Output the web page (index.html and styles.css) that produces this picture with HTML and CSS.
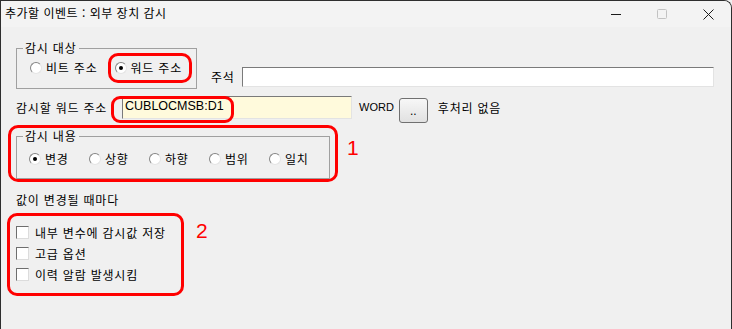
FILE: index.html
```html
<!DOCTYPE html>
<html lang="ko">
<head>
<meta charset="utf-8">
<title>추가할 이벤트 : 외부 장치 감시</title>
<link rel="stylesheet" href="styles.css">
</head>
<body>
<div class="window">
  <div class="titlebar">
    <span class="title">추가할 이벤트 : 외부 장치 감시</span>
    <div class="controls">
      <span class="ctl"><svg width="10" height="10" viewBox="0 0 10 10"><path d="M0 5.5H10" stroke="#1a1a1a" stroke-width="1"/></svg></span>
      <span class="ctl"><svg width="10" height="10" viewBox="0 0 10 10"><rect x="0.5" y="0.5" width="9" height="9" rx="1" fill="none" stroke="#c2c2c2" stroke-width="1"/></svg></span>
      <span class="ctl"><svg width="11" height="11" viewBox="0 0 11 11"><path d="M0.5 0.5L10.5 10.5M10.5 0.5L0.5 10.5" stroke="#1a1a1a" stroke-width="1"/></svg></span>
    </div>
  </div>
  <div class="content">
    <div class="row-target">
      <fieldset class="group group-target">
        <legend>감시 대상</legend>
        <div class="radios radios-target">
          <span class="radio"><span class="dot"></span>비트 주소</span>
          <span class="radio checked marked"><span class="dot"></span>워드 주소<span class="mark mark-word"></span></span>
        </div>
      </fieldset>
      <div class="comment">
        <span class="comment-label">주석</span>
        <span class="textbox wide"></span>
      </div>
    </div>

    <div class="row-address">
      <span class="field-label">감시할 워드 주소</span>
      <span class="textbox address">CUBLOCMSB:D1<span class="mark mark-address"></span></span>
      <span class="unit">WORD</span>
      <span class="browse">..</span>
      <span class="post">후처리 없음</span>
    </div>

    <div class="annot-row row-content">
      <div class="ring ring-content">
        <fieldset class="group group-content">
          <legend>감시 내용</legend>
          <div class="radios radios-content">
            <span class="radio checked"><span class="dot"></span>변경</span>
            <span class="radio"><span class="dot"></span>상향</span>
            <span class="radio"><span class="dot"></span>하향</span>
            <span class="radio"><span class="dot"></span>범위</span>
            <span class="radio"><span class="dot"></span>일치</span>
          </div>
        </fieldset>
      </div>
      <span class="num num-1">1</span>
    </div>

    <div class="caption">값이 변경될 때마다</div>

    <div class="annot-row row-options">
      <div class="ring ring-options">
        <div class="check"><span class="box"></span>내부 변수에 감시값 저장</div>
        <div class="check"><span class="box"></span>고급 옵션</div>
        <div class="check"><span class="box"></span>이력 알람 발생시킴</div>
      </div>
      <span class="num num-2">2</span>
    </div>
  </div>
</div>
</body>
</html>
```

FILE: styles.css
```css
* { box-sizing: border-box; }
html, body { margin: 0; padding: 0; }
body {
  width: 732px;
  height: 329px;
  overflow: hidden;
  background: #f0f0f0;
  font-family: "Noto Sans CJK KR", "Noto Sans", sans-serif;
  font-size: 12px;
  letter-spacing: 0.8px;
  color: #000;
}
.window {
  width: 732px;
  height: 329px;
  border: 1px solid #2e2e2e;
  border-bottom: none;
  border-top-right-radius: 8px;
  background: #f0f0f0;
  overflow: hidden;
}
.titlebar {
  height: 26px;
  display: flex;
  align-items: center;
  justify-content: space-between;
  background: #f3f3f3;
  padding-left: 4px;
}
.title { line-height: 14px; padding-bottom: 2px; white-space: nowrap; letter-spacing: 0.5px; }
.controls { display: flex; align-self: stretch; }
.ctl {
  width: 46px;
  display: flex;
  align-items: center;
  justify-content: center;
}
.ctl svg { display: block; }

.content { padding-left: 15px; }

.row-target {
  display: flex;
  align-items: flex-end;
  margin-top: 14px;
}
fieldset.group {
  margin: 0;
  padding: 0;
  border: 1px solid #a0a0a0;
  min-width: 0;
}
fieldset.group legend {
  margin-left: 6px;
  padding: 0 2px 0 2px;
  line-height: 14px;
}
.group-target { width: 181px; }
.group-content { width: 314px; }

.radios { display: flex; }
.radios-target { padding: 5px 0 12px 13px; }
.radios-content { padding: 8px 0 11px 12px; }
.radio {
  display: flex;
  align-items: center;
  height: 16px;
  line-height: 16px;
  white-space: nowrap;
}
.radios-target .radio + .radio { margin-left: 17px; }
.radios-content .radio { width: 61px; }
.dot {
  width: 12px;
  height: 12px;
  border-radius: 50%;
  background: #fff;
  border: 1px solid;
  border-color: #858585 #e4e4e4 #e4e4e4 #858585;
  margin-right: 4px;
  display: flex;
  align-items: center;
  justify-content: center;
  flex: none;
}
.checked .dot::after {
  content: "";
  width: 4px;
  height: 4px;
  border-radius: 50%;
  background: #000;
}
.marked { position: relative; }
.mark {
  position: absolute;
  border: 3px solid #ff0000;
  border-radius: 10px;
  pointer-events: none;
}
.mark-word { left: -7px; top: -7px; width: 84px; height: 30px; }
.mark-address { left: -12px; top: -1px; width: 123px; height: 27px; border-radius: 9px; }

.comment {
  display: flex;
  align-items: center;
  margin-left: 14px;
  margin-bottom: 2px;
}
.comment-label { margin-right: 7px; line-height: 14px; }
.textbox {
  display: block;
  background: #fff;
  border: 1px solid;
  border-color: #7a7a7a #e3e3e3 #e3e3e3 #7a7a7a;
}
.textbox.wide { width: 472px; height: 20px; }

.row-address {
  display: flex;
  align-items: flex-start;
  margin-top: 7px;
  height: 27px;
}
.field-label { width: 106px; line-height: 23px; white-space: nowrap; }
.textbox.address {
  position: relative;
  width: 230px;
  height: 23px;
  background: #fffadc;
  font-family: "Liberation Sans", sans-serif;
  font-size: 12.5px;
  letter-spacing: 0;
  line-height: 19px;
  padding-left: 2px;
}
.unit {
  margin-left: 7px;
  font-family: "Liberation Sans", sans-serif;
  font-size: 11px;
  letter-spacing: 0;
  line-height: 23px;
}
.browse {
  margin-left: 5px;
  margin-top: 2px;
  width: 29px;
  height: 25px;
  border: 1px solid #707070;
  border-radius: 3px;
  background: linear-gradient(#f7f7f7, #e1e1e1);
  display: flex;
  align-items: center;
  justify-content: center;
  font-family: "Liberation Sans", sans-serif;
  font-size: 12px;
  letter-spacing: 0;
  line-height: 14px;
}
.post { margin-left: 10px; line-height: 23px; white-space: nowrap; }

.annot-row { display: flex; align-items: flex-start; }
.ring { border: 3px solid #ff0000; border-radius: 10px; }
.row-content { margin-top: 2px; }
.ring-content { margin-left: -8px; padding: 1px 5px 0 5px; }
.num {
  color: #ff0000;
  font-family: "Liberation Sans", sans-serif;
  font-size: 21px;
  letter-spacing: 0;
  line-height: 21px;
}
.num-1 { margin-left: 9px; margin-top: 12px; }

.caption { margin-top: 11px; line-height: 14px; }

.row-options { margin-top: 6px; }
.ring-options { margin-left: -9px; width: 177px; padding: 6px 0 8px 6px; }
.check {
  display: flex;
  align-items: center;
  height: 21px;
  white-space: nowrap;
}
.box {
  width: 13px;
  height: 13px;
  background: #fff;
  border: 1px solid;
  border-color: #6e6e6e #dcdcdc #dcdcdc #6e6e6e;
  margin-right: 6px;
  flex: none;
}
.num-2 { margin-left: 12px; margin-top: 7px; }
```
